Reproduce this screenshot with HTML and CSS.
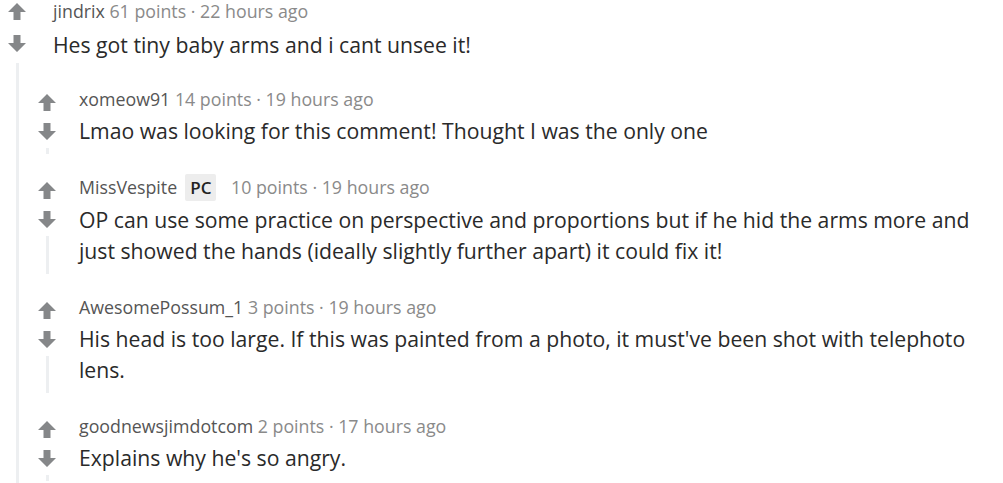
FILE: index.html
```html
<!DOCTYPE html>
<html lang="en">
<head>
    <meta charset="UTF-8">
    <title>Comments</title>
    <link rel="stylesheet" href="styles.css">
</head>
<body>

    <div class="comment top">
        <div class="rail">
            <svg class="arrow" viewBox="0 0 18 17"><polygon points="9,0 18,9 12.5,9 12.5,17 5.5,17 5.5,9 0,9"/></svg>
            <svg class="arrow down" viewBox="0 0 18 17"><polygon points="9,17 18,8 12.5,8 12.5,0 5.5,0 5.5,8 0,8"/></svg>
            <div class="line"></div>
        </div>
        <div class="main">
            <div class="meta"><span class="author">jindrix</span> 61 points · 22 hours ago</div>
            <div class="text">Hes got tiny baby arms and i cant unsee it!</div>

            <div class="replies">
                <div class="comment">
                    <div class="rail">
                        <svg class="arrow" viewBox="0 0 18 17"><polygon points="9,0 18,9 12.5,9 12.5,17 5.5,17 5.5,9 0,9"/></svg>
                        <svg class="arrow down" viewBox="0 0 18 17"><polygon points="9,17 18,8 12.5,8 12.5,0 5.5,0 5.5,8 0,8"/></svg>
                        <div class="line"></div>
                    </div>
                    <div class="main">
                        <div class="meta"><span class="author">xomeow91</span> 14 points · 19 hours ago</div>
                        <div class="text">Lmao was looking for this comment! Thought I was the only one</div>
                    </div>
                </div>

                <div class="comment">
                    <div class="rail">
                        <svg class="arrow" viewBox="0 0 18 17"><polygon points="9,0 18,9 12.5,9 12.5,17 5.5,17 5.5,9 0,9"/></svg>
                        <svg class="arrow down" viewBox="0 0 18 17"><polygon points="9,17 18,8 12.5,8 12.5,0 5.5,0 5.5,8 0,8"/></svg>
                        <div class="line"></div>
                    </div>
                    <div class="main">
                        <div class="meta"><span class="author">MissVespite</span><span class="flair">PC</span> 10 points · 19 hours ago</div>
                        <div class="text">OP can use some practice on perspective and proportions but if he hid the arms more and just showed the hands (ideally slightly further apart) it could fix it!</div>
                    </div>
                </div>

                <div class="comment">
                    <div class="rail">
                        <svg class="arrow" viewBox="0 0 18 17"><polygon points="9,0 18,9 12.5,9 12.5,17 5.5,17 5.5,9 0,9"/></svg>
                        <svg class="arrow down" viewBox="0 0 18 17"><polygon points="9,17 18,8 12.5,8 12.5,0 5.5,0 5.5,8 0,8"/></svg>
                        <div class="line"></div>
                    </div>
                    <div class="main">
                        <div class="meta"><span class="author">AwesomePossum_1</span> 3 points · 19 hours ago</div>
                        <div class="text">His head is too large. If this was painted from a photo, it must've been shot with telephoto lens.</div>
                    </div>
                </div>

                <div class="comment">
                    <div class="rail">
                        <svg class="arrow" viewBox="0 0 18 17"><polygon points="9,0 18,9 12.5,9 12.5,17 5.5,17 5.5,9 0,9"/></svg>
                        <svg class="arrow down" viewBox="0 0 18 17"><polygon points="9,17 18,8 12.5,8 12.5,0 5.5,0 5.5,8 0,8"/></svg>
                        <div class="line"></div>
                    </div>
                    <div class="main">
                        <div class="meta"><span class="author">goodnewsjimdotcom</span> 2 points · 17 hours ago</div>
                        <div class="text">Explains why he's so angry.</div>
                    </div>
                </div>
            </div>
        </div>
    </div>

</body>
</html>
```

FILE: styles.css
```css
body {
    font-family: 'Open Sans', sans-serif;
    margin: 0;
    background-color: #fff;
    color: #2a2a2a;
}

.comment {
    display: flex;
    align-items: stretch;
}

.rail {
    width: 18px;
    display: flex;
    flex-direction: column;
    align-items: center;
    padding-bottom: 22px;
}

.top > .rail {
    width: 34px;
    padding-bottom: 0;
}

.arrow {
    width: 18px;
    height: 17px;
    fill: #858789;
    margin-top: 6px;
    flex-shrink: 0;
}

.arrow.down {
    margin-top: 12px;
}

.top > .rail .arrow {
    margin-top: 3px;
}

.top > .rail .arrow.down {
    margin-top: 15px;
}

.line {
    flex: 1;
    width: 3px;
    margin-top: 8px;
    background-color: #edeff1;
}

.top > .rail .line {
    margin-top: 11px;
}

.main {
    flex: 1;
    padding-left: 23px;
    padding-bottom: 30px;
}

.top > .main {
    padding-left: 19px;
    padding-bottom: 0;
}

.meta {
    font-size: 17.8px;
    line-height: 22px;
    color: #8a8a8a;
    margin-bottom: 5px;
    white-space: nowrap;
}

.top > .main > .meta {
    margin-bottom: 7px;
}

.author {
    color: #555;
}

.flair {
    background-color: #ededed;
    color: #222;
    font-weight: 600;
    font-size: 17px;
    padding: 2px 5px;
    margin: 0 10px 0 8px;
    border-radius: 2px;
}

.text {
    font-size: 21.2px;
    line-height: 31px;
    padding-right: 20px;
}

.replies {
    margin-left: -15px;
    margin-top: 28px;
}
```
